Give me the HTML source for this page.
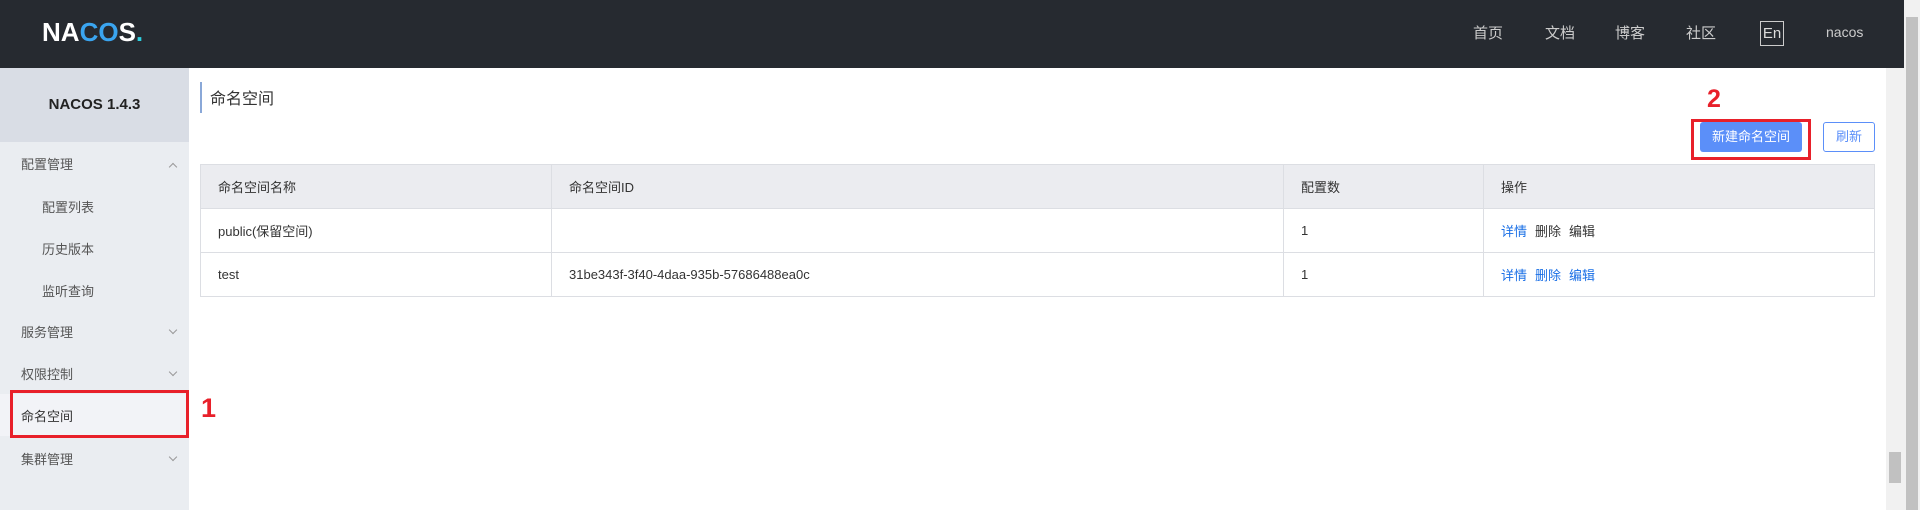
<!DOCTYPE html>
<html><head><meta charset="utf-8"><style>
*{margin:0;padding:0;box-sizing:border-box}
body{width:1920px;height:510px;overflow:hidden;background:#fff;font-family:"Liberation Sans","Noto Sans CJK SC",sans-serif;font-size:13px;color:#333;position:relative}
.hdr{position:absolute;left:0;top:0;width:1904px;height:68px;background:#262a30}
.nav{position:absolute;top:22px;color:#ccc;font-size:15px}
.side{position:absolute;left:0;top:68px;width:189px;height:442px;background:#eaedf1}
.ver{height:74px;background:#d9dde5;text-align:center;line-height:74px;font-weight:bold;font-size:15px;color:#222}
.mi{position:absolute;left:21px;color:#555;font-size:13px}
.sub{left:42px}
.arr{position:absolute;left:170px;width:6px;height:6px;border-right:1px solid #999;border-bottom:1px solid #999;transform:rotate(45deg)}
.up{transform:rotate(-135deg)}
table{position:absolute;left:200px;top:164px;width:1675px;border-collapse:collapse;border:1px solid #dcdee3}
td,th{border:1px solid #dcdee3;height:44px;padding:0 17px;text-align:left;font-weight:normal;font-size:13px}
th{background:#ebecf0;color:#333}
a{color:#1a6fe6;text-decoration:none;margin-right:8px}
a.g{color:#333}
</style></head><body>
<div class="hdr">
<div style="position:absolute;left:42px;top:17px;font-size:26px;font-weight:bold;color:#fff;letter-spacing:0px;font-family:'Liberation Sans',sans-serif">NA<span style="color:#3aa5f0">CO</span>S<span style="color:#2ed0e0">.</span></div>
<div class="nav" style="left:1473px">首页</div>
<div class="nav" style="left:1545px">文档</div>
<div class="nav" style="left:1615px">博客</div>
<div class="nav" style="left:1686px">社区</div>
<div style="position:absolute;left:1760px;top:21px;width:24px;height:25px;border:1px solid #ccc;color:#ddd;font-size:15px;text-align:center;line-height:23px">En</div>
<div class="nav" style="left:1826px;font-size:14px;top:24px">nacos</div>
</div>
<div class="side">
<div class="ver">NACOS 1.4.3</div>
<div class="mi" style="top:86px">配置管理</div><div class="arr up" style="top:96px"></div>
<div class="mi sub" style="top:129px">配置列表</div>
<div class="mi sub" style="top:171px">历史版本</div>
<div class="mi sub" style="top:213px">监听查询</div>
<div class="mi" style="top:254px">服务管理</div><div class="arr" style="top:259px"></div>
<div class="mi" style="top:296px">权限控制</div><div class="arr" style="top:301px"></div>
<div style="position:absolute;left:0;top:326px;width:189px;height:42px;background:#f2f3f7"></div>
<div class="mi" style="top:338px;color:#333">命名空间</div>
<div class="mi" style="top:381px">集群管理</div><div class="arr" style="top:386px"></div>
</div>
<div style="position:absolute;left:10px;top:390px;width:179px;height:48px;border:3px solid #e8202a"></div>
<div style="position:absolute;left:201px;top:393px;color:#e8202a;font-size:27px;font-weight:bold;font-family:'Liberation Sans',sans-serif">1</div>
<div style="position:absolute;left:200px;top:82px;width:2px;height:31px;background:#8aa8d8"></div>
<div style="position:absolute;left:210px;top:85px;font-size:16px;color:#333">命名空间</div>
<div style="position:absolute;left:1707px;top:85px;color:#e8202a;font-size:25px;font-weight:bold;font-family:'Liberation Sans',sans-serif">2</div>
<div style="position:absolute;left:1700px;top:122px;width:102px;height:30px;background:#5b8ff9;border-radius:3px;color:#fff;text-align:center;line-height:30px">新建命名空间</div>
<div style="position:absolute;left:1691px;top:119px;width:120px;height:41px;border:3px solid #e8202a"></div>
<div style="position:absolute;left:1823px;top:122px;width:52px;height:30px;border:1px solid #5b8ff9;border-radius:3px;color:#5b8ff9;text-align:center;line-height:28px">刷新</div>
<table>
<tr><th style="width:351px">命名空间名称</th><th style="width:732px">命名空间ID</th><th style="width:200px">配置数</th><th>操作</th></tr>
<tr><td>public(保留空间)</td><td></td><td>1</td><td><a>详情</a><a class="g">删除</a><a class="g">编辑</a></td></tr>
<tr><td>test</td><td>31be343f-3f40-4daa-935b-57686488ea0c</td><td>1</td><td><a>详情</a><a>删除</a><a>编辑</a></td></tr>
</table>
<div style="position:absolute;left:1886px;top:68px;width:18px;height:442px;background:#f1f1f1"></div>
<div style="position:absolute;left:1889px;top:452px;width:12px;height:31px;background:#c1c1c1"></div>
<div style="position:absolute;left:1904px;top:0;width:16px;height:510px;background:#f1f1f1"></div>
<div style="position:absolute;left:1906px;top:17px;width:12px;height:493px;background:#c1c1c1"></div>
</body></html>
